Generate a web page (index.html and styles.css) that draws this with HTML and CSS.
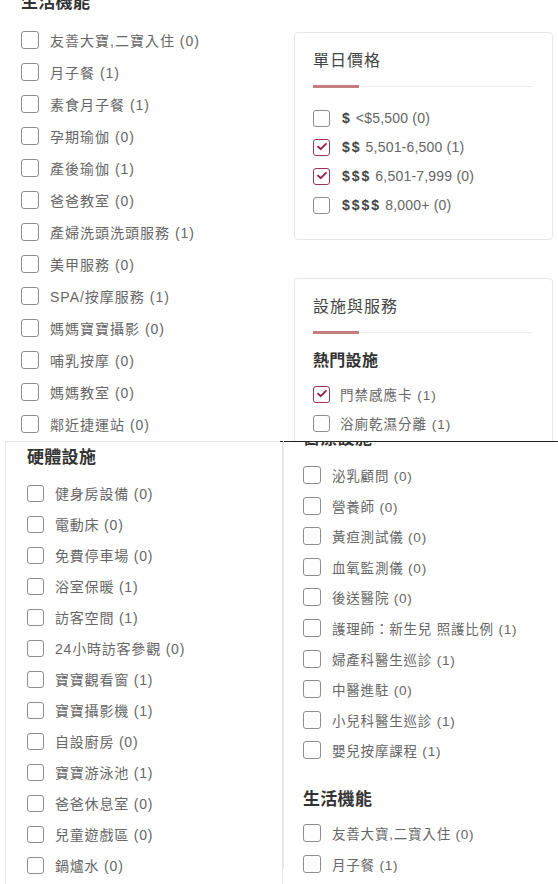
FILE: index.html
```html
<!DOCTYPE html>
<html lang="zh-Hant">
<head>
<meta charset="utf-8">
<title>篩選</title>
<link rel="stylesheet" href="styles.css">
</head>
<body>
<div class="sheet">
  <section class="top">
    <div class="col-a">
      <h3 class="group-title cut-a">生活機能</h3>
      <ul class="opts rows-a">
        <li class="opt"><span class="box"></span><span class="lbl">友善大寶,二寶入住 (0)</span></li>
        <li class="opt"><span class="box"></span><span class="lbl">月子餐 (1)</span></li>
        <li class="opt"><span class="box"></span><span class="lbl">素食月子餐 (1)</span></li>
        <li class="opt"><span class="box"></span><span class="lbl">孕期瑜伽 (0)</span></li>
        <li class="opt"><span class="box"></span><span class="lbl">產後瑜伽 (1)</span></li>
        <li class="opt"><span class="box"></span><span class="lbl">爸爸教室 (0)</span></li>
        <li class="opt"><span class="box"></span><span class="lbl">產婦洗頭洗頭服務 (1)</span></li>
        <li class="opt"><span class="box"></span><span class="lbl">美甲服務 (0)</span></li>
        <li class="opt"><span class="box"></span><span class="lbl">SPA/按摩服務 (1)</span></li>
        <li class="opt"><span class="box"></span><span class="lbl">媽媽寶寶攝影 (0)</span></li>
        <li class="opt"><span class="box"></span><span class="lbl">哺乳按摩 (0)</span></li>
        <li class="opt"><span class="box"></span><span class="lbl">媽媽教室 (0)</span></li>
        <li class="opt"><span class="box"></span><span class="lbl">鄰近捷運站 (0)</span></li>
      </ul>
    </div>
    <div class="col-b">
      <div class="card price-card">
        <h2 class="card-title">單日價格</h2>
        <div class="rule"><span></span></div>
        <ul class="opts rows-price">
          <li class="opt"><span class="box"></span><b class="cur">$</b><span class="num">&lt;$5,500 (0)</span></li>
          <li class="opt"><span class="box on"><svg viewBox="0 0 16 16"><polyline points="3.5,7.5 6.5,10.5 12.5,4.5"/></svg></span><b class="cur">$$</b><span class="num">5,501-6,500 (1)</span></li>
          <li class="opt"><span class="box on"><svg viewBox="0 0 16 16"><polyline points="3.5,7.5 6.5,10.5 12.5,4.5"/></svg></span><b class="cur">$$$</b><span class="num">6,501-7,999 (0)</span></li>
          <li class="opt"><span class="box"></span><b class="cur">$$$$</b><span class="num">8,000+ (0)</span></li>
        </ul>
      </div>
      <div class="card fac-card">
        <h2 class="card-title">設施與服務</h2>
        <div class="rule"><span></span></div>
        <h3 class="group-title sub">熱門設施</h3>
        <ul class="opts rows-fac">
          <li class="opt"><span class="box on"><svg viewBox="0 0 16 16"><polyline points="3.5,7.5 6.5,10.5 12.5,4.5"/></svg></span><span class="lbl small">門禁感應卡 (1)</span></li>
          <li class="opt"><span class="box"></span><span class="lbl small">浴廁乾濕分離 (1)</span></li>
          <li class="opt"><span class="box"></span><span class="lbl small">嬰兒床 (1)</span></li>
        </ul>
      </div>
    </div>
  </section>
  <section class="bottom">
    <div class="hw-card">
      <h3 class="group-title">硬體設施</h3>
      <ul class="opts rows-hw">
        <li class="opt"><span class="box"></span><span class="lbl">健身房設備 (0)</span></li>
        <li class="opt"><span class="box"></span><span class="lbl">電動床 (0)</span></li>
        <li class="opt"><span class="box"></span><span class="lbl">免費停車場 (0)</span></li>
        <li class="opt"><span class="box"></span><span class="lbl">浴室保暖 (1)</span></li>
        <li class="opt"><span class="box"></span><span class="lbl">訪客空間 (1)</span></li>
        <li class="opt"><span class="box"></span><span class="lbl">24小時訪客參觀 (0)</span></li>
        <li class="opt"><span class="box"></span><span class="lbl">寶寶觀看窗 (1)</span></li>
        <li class="opt"><span class="box"></span><span class="lbl">寶寶攝影機 (1)</span></li>
        <li class="opt"><span class="box"></span><span class="lbl">自設廚房 (0)</span></li>
        <li class="opt"><span class="box"></span><span class="lbl">寶寶游泳池 (1)</span></li>
        <li class="opt"><span class="box"></span><span class="lbl">爸爸休息室 (0)</span></li>
        <li class="opt"><span class="box"></span><span class="lbl">兒童遊戲區 (0)</span></li>
        <li class="opt"><span class="box"></span><span class="lbl">鍋爐水 (0)</span></li>
      </ul>
    </div>
    <div class="med-pane">
      <div class="med-inner">
        <h3 class="group-title cut-med">醫療設施</h3>
        <ul class="opts rows-med">
          <li class="opt"><span class="box"></span><span class="lbl">泌乳顧問 (0)</span></li>
          <li class="opt"><span class="box"></span><span class="lbl">營養師 (0)</span></li>
          <li class="opt"><span class="box"></span><span class="lbl">黃疸測試儀 (0)</span></li>
          <li class="opt"><span class="box"></span><span class="lbl">血氧監測儀 (0)</span></li>
          <li class="opt"><span class="box"></span><span class="lbl">後送醫院 (0)</span></li>
          <li class="opt"><span class="box"></span><span class="lbl">護理師：新生兒 照護比例 (1)</span></li>
          <li class="opt"><span class="box"></span><span class="lbl">婦產科醫生巡診 (1)</span></li>
          <li class="opt"><span class="box"></span><span class="lbl">中醫進駐 (0)</span></li>
          <li class="opt"><span class="box"></span><span class="lbl">小兒科醫生巡診 (1)</span></li>
          <li class="opt"><span class="box"></span><span class="lbl">嬰兒按摩課程 (1)</span></li>
        </ul>
        <h3 class="group-title life2">生活機能</h3>
        <ul class="opts rows-life2">
          <li class="opt"><span class="box"></span><span class="lbl">友善大寶,二寶入住 (0)</span></li>
          <li class="opt"><span class="box"></span><span class="lbl">月子餐 (1)</span></li>
        </ul>
      </div>
    </div>
  </section>
</div>
</body>
</html>
```

FILE: styles.css
```css
* {
  box-sizing: border-box;
  margin: 0;
  padding: 0;
}

body {
  margin: 0;
  background: #fff;
  font-family: "Liberation Sans", "Noto Sans CJK TC", sans-serif;
  color: #666;
}

.sheet {
  width: 558px;
  height: 884px;
  overflow: hidden;
}

ul {
  list-style: none;
}

.top {
  height: 441px;
  display: grid;
  grid-template-columns: 283px 1fr;
  overflow: hidden;
}

.bottom {
  height: 443px;
  display: grid;
  grid-template-columns: 280px 1fr;
  overflow: hidden;
}

.group-title {
  font-size: 17px;
  font-weight: 700;
  color: #333;
  line-height: 24px;
  letter-spacing: 0.3px;
}

.opt {
  display: flex;
  align-items: center;
}

.box {
  flex: none;
  width: 18px;
  height: 18px;
  border: 1.5px solid #8d8d8d;
  border-radius: 3px;
  margin-right: 11px;
  display: flex;
  align-items: center;
  justify-content: center;
  background: #fff;
}

.box.on {
  border-color: #98335f;
}

.box svg {
  width: 14px;
  height: 14px;
}

.box svg polyline {
  fill: none;
  stroke: #961f55;
  stroke-width: 2.2;
  stroke-linecap: round;
  stroke-linejoin: round;
}

.lbl {
  font-size: 14px;
  letter-spacing: 1px;
  color: #666;
  white-space: nowrap;
}

/* top-left column */
.col-a {
  padding-left: 21px;
}

.cut-a {
  margin-top: -9px;
}

.rows-a {
  margin-top: 9px;
}

.rows-a .opt {
  height: 32px;
}

/* top-right cards */
.col-b {
  padding: 32px 5px 0 11px;
}

.card {
  border: 1px solid #e7e7e7;
  border-radius: 4px;
  box-shadow: 0 0 2px rgba(0, 0, 0, 0.04);
  padding: 16px 19px 19.5px 18px;
}

.card-title {
  font-size: 16px;
  font-weight: 400;
  color: #444;
  line-height: 24px;
  letter-spacing: 1px;
}

.rule {
  margin-top: 12px;
  height: 3px;
  background: linear-gradient(to bottom, transparent 1px, #ececec 1px, #ececec 2px, transparent 2px);
}

.rule span {
  display: block;
  width: 46px;
  height: 3px;
  background: #c57d7d;
}

.card .box {
  width: 17px;
  height: 17px;
  margin-right: 12px;
}

.rows-price {
  margin-top: 15.5px;
}

.rows-price .opt {
  height: 29px;
}

.cur {
  font-size: 14px;
  font-weight: 700;
  color: #444;
  letter-spacing: 2px;
  margin-right: 4px;
}

.num {
  font-size: 14px;
  color: #666;
  letter-spacing: 0.2px;
}

.fac-card {
  margin-top: 38px;
}

.sub {
  font-size: 16px;
  margin-top: 15px;
}

.rows-fac {
  margin-top: 6.5px;
}

.rows-fac .opt {
  height: 29px;
}

.lbl.small {
  font-size: 13.5px;
}

.fac-card .box {
  margin-right: 10px;
}

/* bottom-left card */
.hw-card {
  margin-left: 5px;
  margin-right: -3px;
  border: 1px solid #e6e6e6;
  border-bottom: none;
  padding: 4px 0 0 21px;
}

.rows-hw {
  margin-top: 7.5px;
}

.rows-hw .opt {
  height: 31px;
}

.hw-card .box {
  width: 17px;
  height: 17px;
}

.hw-card .lbl {
  letter-spacing: 0.8px;
}

/* bottom-right pane */
.med-pane {
  border-top: 1px solid #222;
}

.med-inner {
  margin-left: 3px;
  height: 100%;
  border-left: 1px solid #e6e6e6;
  padding-left: 19px;
}

.med-inner .lbl {
  font-size: 13.5px;
  letter-spacing: 0.8px;
}

.cut-med {
  margin-top: -15px;
}

.rows-med {
  margin-top: 8.7px;
}

.rows-med .opt {
  height: 30.6px;
}

.life2 {
  margin-top: 22px;
}

.rows-life2 {
  margin-top: 5.5px;
}

.rows-life2 .opt {
  height: 31px;
}
```
